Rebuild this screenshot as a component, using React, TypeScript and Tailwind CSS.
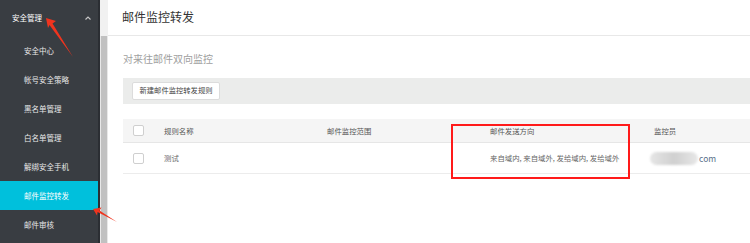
const menu = ["安全中心", "帐号安全策略", "黑名单管理", "白名单管理", "解绑安全手机", "邮件监控转发", "邮件审核"];

const Sidebar = () => (
    <aside className="w-[98px] shrink-0 bg-[#393d42] text-[7.5px] text-[#e8e8e8]">
        <div className="flex h-[36px] items-center justify-between pl-[12px] pr-[6px] text-[7.5px] text-white">
            <span>安全管理</span>
            <svg width="8" height="6" viewBox="0 0 8 6" fill="none" stroke="#c8c8c8" strokeWidth="1.1">
                <path d="M1.5 4.5 4 2 6.5 4.5" />
            </svg>
        </div>
        {menu.map((item) => (
            <div
                key={item}
                className={
                    item === "邮件监控转发"
                        ? "flex h-[29px] items-center bg-[#00c0dc] pl-[24px] text-white"
                        : "flex h-[29px] items-center pl-[24px]"
                }
            >
                {item}
            </div>
        ))}
    </aside>
);

const Scrollbar = () => (
    <div className="flex w-[10px] shrink-0 flex-col border-l-2 border-[#2b2e33]">
        <div className="h-[36px] bg-[#f1f1f1]" />
        <div className="flex-1 border-x border-[#e8e8e8] bg-[#c1c1c1]" />
    </div>
);

export default function App() {
    return (
        <div className="relative flex h-[243px] w-[750px] overflow-hidden bg-white font-['Noto_Sans_CJK_SC','Noto_Sans',sans-serif]">
            <Sidebar />
            <Scrollbar />
            <main className="flex-1">
                <div className="flex h-[36px] items-center border-b border-[#e8e8e8] pb-[2px] pl-[14px] text-[12px] text-[#333]">
                    邮件监控转发
                </div>
                <div className="pl-[15px]">
                    <div className="flex h-[42px] items-center pt-[2px] text-[10px] text-[#a0a0a0]">对来往邮件双向监控</div>
                    <div className="flex h-[26px] items-center bg-[#ebeceb] pl-[9px]">
                        <button className="h-[18px] w-[88px] rounded-[2px] border border-[#dcdcdc] bg-white text-[7.3px] leading-none text-[#444]">
                            新建邮件监控转发规则
                        </button>
                    </div>
                    <div className="mt-[15px] text-[7.4px]">
                        <div className="grid h-[24px] grid-cols-[41px_163px_163px_164px_1fr] items-center border-b border-[#e6e6e6] bg-[#f5f5f5] text-[#555]">
                            <span className="ml-[10px] h-[11px] w-[11px] rounded-[2px] border border-[#cfcfcf] bg-white" />
                            <span>规则名称</span>
                            <span>邮件监控范围</span>
                            <span>邮件发送方向</span>
                            <span>监控员</span>
                        </div>
                        <div className="grid h-[31px] grid-cols-[41px_163px_163px_164px_1fr] items-center border-b border-[#ececec] text-[#666]">
                            <span className="ml-[10px] h-[11px] w-[11px] rounded-[2px] border border-[#cfcfcf] bg-white" />
                            <span>测试</span>
                            <span />
                            <span>来自域内, 来自域外, 发给域内, 发给域外</span>
                            <span className="flex items-center">
                                <span className="-ml-[4px] h-[13px] w-[48px] rounded-full bg-gradient-to-r from-[#e6e6e6] via-[#d0d0d0] to-[#e8e8e8] blur-[1px]" />
                                <span className="ml-[1px] text-[8.5px] text-[#5a6f8a]">com</span>
                            </span>
                        </div>
                    </div>
                </div>
            </main>

            {/* red markup */}
            <div className="absolute left-[451px] top-[124px] h-[55px] w-[179px] border-2 border-[#ff1a1a]" />
            <svg className="absolute left-0 top-0" width="750" height="243" viewBox="0 0 750 243">
                <polygon points="46,18 56,21 52.5,23.5 73,57 49.5,25 48,28" fill="#f0341e" />
                <polygon points="93,209 101.5,207.5 99.5,210.5 117,222 97.5,212 97,215.5" fill="#f0341e" />
            </svg>
        </div>
    );
}
